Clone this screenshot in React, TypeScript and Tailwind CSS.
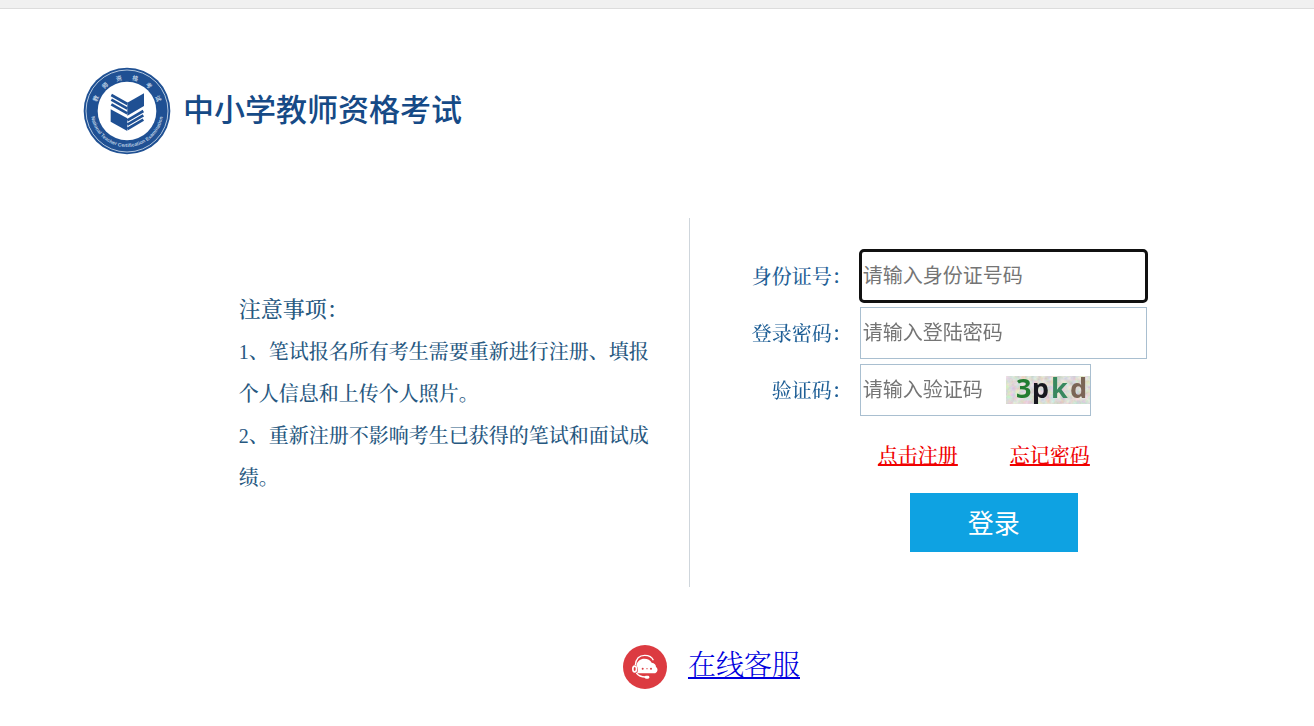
import type { ComponentProps } from "react";

type LabeledInputProps = ComponentProps<"input"> & {
  label: string;
};

const sealCharacters = [
  { text: "教", angle: -68 },
  { text: "师", angle: -41 },
  { text: "资", angle: -14 },
  { text: "格", angle: 14 },
  { text: "考", angle: 41 },
  { text: "试", angle: 68 },
];

function SiteLogo() {
  return (
    <svg viewBox="0 0 264 264" className="size-[88px] shrink-0" aria-hidden="true">
      <defs>
        <path id="ring-bottom" d="M 27 102 A 109 109 0 1 0 237 102" />
      </defs>
      <circle cx="132" cy="132" r="130" fill="#1f5093" />
      <circle cx="132" cy="132" r="123" fill="none" stroke="#b4c8df" strokeWidth="3" />
      <circle cx="132" cy="132" r="88" fill="#ffffff" />
      <g fill="#b9cce2" fontWeight="700">
        <g
          fontSize="18"
          fontFamily="'Noto Sans CJK SC', sans-serif"
          textAnchor="middle"
        >
          {sealCharacters.map(({ text, angle }) => (
            <text key={text} x="132" y="38" transform={`rotate(${angle} 132 132)`}>
              {text}
            </text>
          ))}
        </g>
        <text
          fontSize="15"
          fontFamily="'Liberation Sans', sans-serif"
          textAnchor="middle"
        >
          <textPath href="#ring-bottom" startOffset="50%">
            National Teacher Certification Examination
          </textPath>
        </text>
      </g>
      <g fill="#1f5093">
        <path d="M133 107 183 79V117L133 146Z" />
        <path d="M83 127 133 154V192L83 164Z" />
      </g>
      <g stroke="#1f5093" strokeWidth="8" fill="none">
        <path d="M85 84 133 111M85 98 133 125M85 112 133 139" />
        <path d="M133 160 181 132M133 173 181 145M133 186 181 158" />
      </g>
    </svg>
  );
}

function CaptchaImage() {
  return (
    <svg
      viewBox="0 0 84 28"
      className="h-7 w-[84px] shrink-0 overflow-visible"
      role="img"
      aria-label="验证码图片"
    >
      <filter id="grain" x="0" y="0" width="100%" height="100%">
        <feTurbulence type="fractalNoise" baseFrequency="0.2" numOctaves="3" seed="4" />
        <feColorMatrix values="0.5 0 0 0 0.48 0 0.5 0 0 0.46 0 0 0.5 0 0.42 0 0 0 0 1" />
      </filter>
      <rect width="84" height="28" fill="#d1cdc3" />
      <rect width="84" height="28" filter="url(#grain)" />
      <g fontFamily="'Noto Sans', sans-serif" fontWeight="700" fontSize="27">
        <text x="10" y="22" fill="#237d32">3</text>
        <text x="26" y="22" fill="#17171f">p</text>
        <text x="45" y="22" fill="#39885f">k</text>
        <text x="64" y="22" fill="#7b6556">d</text>
      </g>
    </svg>
  );
}

function ServiceIcon() {
  return (
    <svg viewBox="0 0 132 132" className="size-11 shrink-0" aria-hidden="true">
      <circle cx="66" cy="66" r="66" fill="#dc3b41" />
      <path
        d="M37 60C39 40 50 31 65 31C78 31 87 36 91 46"
        fill="none"
        stroke="#ffffff"
        strokeWidth="4"
      />
      <path
        d="M42 85C46 78 46 68 40 61C43 48 52 41 64 41C74 41 82 45 86 53C95 54 99 59 99 66C107 71 104 85 93 85Z"
        fill="#ffffff"
      />
      <ellipse cx="35" cy="72" rx="8" ry="11" fill="#ffffff" />
      <ellipse cx="35" cy="72" rx="3" ry="6" fill="#dc3b41" />
      <path
        d="M40 84C46 92 54 96 67 96"
        fill="none"
        stroke="#ffffff"
        strokeWidth="4"
      />
      <rect x="65" y="92" width="14" height="9" rx="4" fill="#ffffff" />
      <g fill="#dc3b41">
        <circle cx="59" cy="71" r="3" />
        <circle cx="72" cy="71" r="2" />
        <circle cx="84" cy="71" r="3" />
      </g>
    </svg>
  );
}

function FieldLabel({ htmlFor, label }: { htmlFor?: string; label: string }) {
  return (
    <label
      htmlFor={htmlFor}
      className="w-[162px] shrink-0 text-right font-['Noto_Serif_CJK_SC','Noto_Sans_CJK_SC',serif] text-xl font-medium text-[#1f5f96]"
    >
      {label}：
    </label>
  );
}

function LabeledInput({ label, id, ...props }: LabeledInputProps) {
  return (
    <div className="flex items-center gap-2">
      <FieldLabel htmlFor={id} label={label} />
      <input
        id={id}
        className="h-[52px] w-[287px] border border-[#a9bfd0] px-0.5 text-xl text-[#333333] placeholder:text-[#757575] focus:rounded-sm focus:outline-3 focus:-outline-offset-2 focus:outline-[#111111]"
        {...props}
      />
    </div>
  );
}

export default function App() {
  return (
    <div className="bg-white font-['Liberation_Sans','Noto_Sans_CJK_SC',sans-serif]">
      <div className="h-[9px] border-b border-[#dcdcdc] bg-[#f0f0f0]" />

      <header className="flex items-center gap-3 pt-[58px] pl-[83px]">
        <SiteLogo />
        <h1 className="text-[31px] font-medium text-[#164a86]">中小学教师资格考试</h1>
      </header>

      <main className="mt-[63px] flex">
        <section className="flex w-[52.5%] items-start justify-end border-r border-[#cfd6dc] pt-[71px] pr-[39px] font-['Liberation_Serif','Noto_Serif_CJK_SC','Noto_Sans_CJK_SC',serif] font-medium text-[#27587f]">
          <div className="w-[411px]">
            <h2 className="text-[22px] leading-[42px]">注意事项：</h2>
            <p className="text-xl leading-[42px]">
              1、笔试报名所有考生需要重新进行注册、填报个人信息和上传个人照片。
            </p>
            <p className="text-xl leading-[42px]">
              2、重新注册不影响考生已获得的笔试和面试成绩。
            </p>
          </div>
        </section>

        <form
          className="flex flex-col gap-[5px] pt-8 pb-[35px]"
          onSubmit={(event) => event.preventDefault()}
        >
          <LabeledInput
            id="id-number"
            label="身份证号"
            placeholder="请输入身份证号码"
            autoFocus
          />
          <LabeledInput
            id="password"
            label="登录密码"
            type="password"
            placeholder="请输入登陆密码"
          />
          <div className="flex items-center gap-2">
            <FieldLabel htmlFor="captcha" label="验证码" />
            <div className="flex h-[52px] w-[231px] items-center border border-[#a9bfd0]">
              <input
                id="captcha"
                placeholder="请输入验证码"
                className="h-full min-w-0 flex-1 px-0.5 text-xl text-[#333333] outline-none placeholder:text-[#757575]"
              />
              <CaptchaImage />
            </div>
          </div>

          <div className="mt-[19px] flex gap-[52px] pl-[188px] font-['Noto_Serif_CJK_SC','Noto_Sans_CJK_SC',serif] text-xl leading-[30px] font-medium text-[#f00000]">
            <a href="#register" className="underline">
              点击注册
            </a>
            <a href="#forgot" className="underline">
              忘记密码
            </a>
          </div>
          <button
            type="submit"
            className="mt-[18px] ml-[220px] h-[59px] w-[168px] bg-[#0ea2e2] pt-1 text-[26px] text-white"
          >
            登录
          </button>
        </form>
      </main>

      <footer className="mt-[58px] flex items-center justify-center gap-[21px] pl-[109px]">
        <ServiceIcon />
        <a
          href="#service"
          className="pb-2 font-['Noto_Serif_CJK_SC','Noto_Sans_CJK_SC',serif] text-[28px] leading-9 font-light text-[#0000dd] underline"
        >
          在线客服
        </a>
      </footer>
    </div>
  );
}
